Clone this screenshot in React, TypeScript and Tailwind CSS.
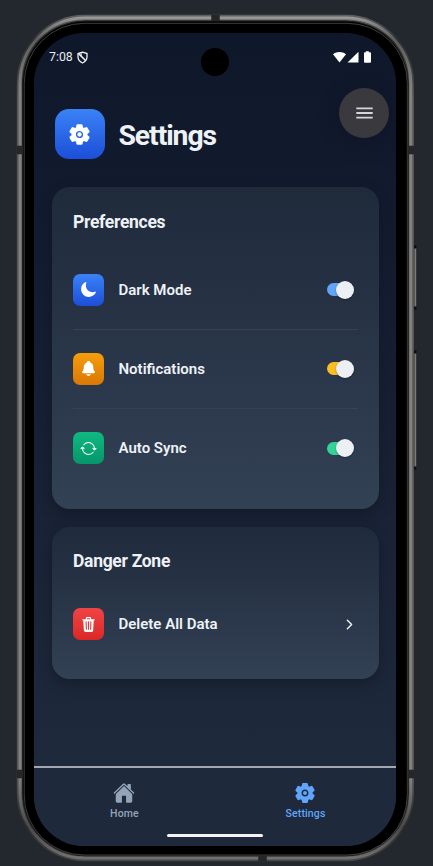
import React from "react";
import {
  IoSettings,
  IoMoon,
  IoNotifications,
  IoSync,
  IoTrash,
  IoHome,
  IoChevronForward,
} from "react-icons/io5";

function IconTile({ tone, children }: { tone: string; children: React.ReactNode }) {
  return (
    <div className={`flex h-8 w-[31px] shrink-0 items-center justify-center rounded-[7px] bg-linear-to-b text-white ${tone}`}>
      {children}
    </div>
  );
}

function Toggle({ color }: { color: string }) {
  return (
    <div className={`mr-[5px] flex h-[13px] w-[26px] items-center justify-end rounded-full ${color}`}>
      <div className="-mr-[1.5px] size-[18px] shrink-0 rounded-full bg-[#eceff4] shadow-[0_1px_2px_rgba(0,0,0,0.35)]" />
    </div>
  );
}

function Row({ tone, icon, label, children }: { tone: string; icon: React.ReactNode; label: string; children: React.ReactNode }) {
  return (
    <div className="flex h-[79px] items-center">
      <IconTile tone={tone}>{icon}</IconTile>
      <span className="mt-px ml-[14.5px] flex-1 text-[15px] leading-none font-semibold text-[#eef2f7]">{label}</span>
      {children}
    </div>
  );
}

function Card({ title, className, children }: { title: string; className: string; children: React.ReactNode }) {
  return (
    <section className={`rounded-[18px] bg-linear-to-b from-[#1f2a3b] to-[#334155] pr-[21px] pl-[21px] shadow-[0_5px_14px_rgba(0,0,0,0.25)] ${className}`}>
      <h2 className="h-[21px] text-[17.5px] leading-[21px] font-bold tracking-[-0.3px] text-[#eef2f7]">{title}</h2>
      {children}
    </section>
  );
}

function StatusBar() {
  return (
    <div className="flex h-[48px] items-center pr-[24px] pl-[15px] text-white">
      <span className="mt-px text-[12.3px] leading-none text-[#e9ebf0]">7:08</span>
      <svg className="ml-[4px]" width="11" height="13" viewBox="0 0 11 13" fill="none" stroke="#eef0f4" strokeWidth="1.3">
        <path d="M5.5 1.2 10 2.6v3.2c0 3-2 5.1-4.5 6.2C3 10.9 1 8.8 1 5.8V2.6z" />
        <path d="M1.6 2.6 8.8 9.8" strokeWidth="1.5" />
        <path d="M4.2 1.8v3.4" strokeWidth="1" />
      </svg>
      <div className="flex-1" />
      <svg width="39" height="13" viewBox="0 0 39 13" fill="#fff">
        <path d="M0 3.2C3.6.1 9.4.1 13 3.2L6.5 11.5z" />
        <path d="M25.5.7v10.8h-11z" />
        <path d="M32.8 1.3V.3h3v1h1.2q1 0 1 1v8.4q0 1-1 1h-5q-1 0-1-1V2.3q0-1 1-1z" />
      </svg>
    </div>
  );
}

function Frame() {
  return (
    <svg className="pointer-events-none absolute inset-0" width="433" height="866" viewBox="0 0 433 866" fill="none">
      <defs>
        <linearGradient id="sideKey" x1="0" x2="1" y1="0" y2="0">
          <stop offset="0" stopColor="#151515" />
          <stop offset=".55" stopColor="#8b8985" />
          <stop offset="1" stopColor="#33322f" />
        </linearGradient>
        <linearGradient id="rail" x1="0" x2="0" y1="15" y2="861" gradientUnits="userSpaceOnUse">
          <stop offset="0" stopColor="#a0a0a0" />
          <stop offset=".012" stopColor="#808080" />
          <stop offset=".03" stopColor="#5c5c5c" />
          <stop offset=".085" stopColor="#838281" />
          <stop offset=".9" stopColor="#838281" />
          <stop offset=".96" stopColor="#484848" />
          <stop offset="1" stopColor="#757374" />
        </linearGradient>
        <linearGradient id="railEdge" x1="0" x2="0" y1="15" y2="861" gradientUnits="userSpaceOnUse">
          <stop offset="0" stopColor="#606060" />
          <stop offset=".03" stopColor="#2e2e2e" />
          <stop offset=".1" stopColor="#555453" />
          <stop offset=".9" stopColor="#555453" />
          <stop offset=".96" stopColor="#2b2b2b" />
          <stop offset="1" stopColor="#484747" />
        </linearGradient>
      </defs>
      <rect x="413.5" y="247" width="3.2" height="61" rx="1.5" fill="url(#sideKey)" />
      <rect x="413.5" y="351" width="3.2" height="118" rx="1.5" fill="url(#sideKey)" />
      <path d="M414 247h2.5M414 308h2.5M414 352h2.5M414 468h2.5" stroke="#0c0c0c" strokeWidth="3" />
      <rect x="16.8" y="14.7" width="397.2" height="846.5" rx="68" fill="url(#railEdge)" />
      <rect x="20" y="17.9" width="390.8" height="840.1" rx="65" stroke="url(#rail)" strokeWidth="3" />
      <rect x="22.6" y="21" width="385.6" height="834.8" rx="62.5" fill="#000" stroke="#1c1c1c" strokeWidth="1" />
      <rect x="24.2" y="23.3" width="383.1" height="831.7" rx="60" stroke="#4c4c4c" strokeWidth=".8" />
      <path d="M16.8 150h6.2M407.8 150h6.2M16.8 774h6.2M407.8 774h6.2" stroke="#262626" strokeWidth="8.5" />
      <path d="M215.5 14.7v6.3M262.5 855.5v5.7" stroke="#262626" strokeWidth="8.5" />
    </svg>
  );
}

export default function App() {
  return (
    <div className="relative h-[866px] w-[433px] overflow-hidden bg-[#23282f] pt-[33px] pl-[34px] font-['Roboto','Noto_Sans',sans-serif]">
      <Frame />
      <main className="relative flex h-[813px] w-[362px] flex-col overflow-hidden rounded-[50px] bg-linear-to-b from-[#0f172a] to-[#1e293b] to-90%">
        <StatusBar />
        <header className="mt-[28.4px] flex h-[50px] items-center pl-[21px]">
          <div className="flex size-[50px] items-center justify-center rounded-[14px] bg-linear-to-b from-[#3b82f6] to-[#1d4ed8] pr-px text-white">
            <IoSettings size={23} />
          </div>
          <h1 className="mt-[4px] ml-[13.5px] text-[28.3px] leading-[34px] font-bold tracking-[-1.05px] text-[#eef2f7]">Settings</h1>
        </header>

        <Card title="Preferences" className="mr-[17.5px] ml-[18px] mt-[28px] h-[321.5px] shrink-0 pt-[24.4px]">
          <div className="mt-[17.9px] divide-y divide-[#3b475a]/70">
            <Row tone="from-[#3b82f6] to-[#1d4ed8]" icon={<IoMoon size={17} />} label="Dark Mode">
              <Toggle color="bg-[#60a5fa]" />
            </Row>
            <Row tone="from-[#f59e0b] to-[#d97706]" icon={<IoNotifications size={17} />} label="Notifications">
              <Toggle color="bg-[#fbbf24]" />
            </Row>
            <Row tone="from-[#10b981] to-[#059669]" icon={<IoSync size={17} />} label="Auto Sync">
              <Toggle color="bg-[#34d399]" />
            </Row>
          </div>
        </Card>

        <Card title="Danger Zone" className="mr-[17.5px] ml-[18px] mt-[18px] h-[152px] shrink-0 pt-[24.4px]">
          <div className="mt-[12.7px]">
            <Row tone="from-[#ef4444] to-[#dc2626]" icon={<IoTrash size={17} />} label="Delete All Data">
              <IoChevronForward size={15} className="mr-px text-[#f1f5f9]" />
            </Row>
          </div>
        </Card>

        <nav className="mt-auto flex h-[80px] shrink-0 border-t-2 border-[#a3a7ae] bg-[#1e293b] pt-[13.5px] text-[10.5px] leading-[13px] font-medium">
          <div className="flex flex-1 flex-col items-center gap-[3px] text-[#94a3b8]">
            <IoHome size={22} className="mr-px" />
            <span className="tracking-[0.15px]">Home</span>
          </div>
          <div className="flex flex-1 flex-col items-center gap-[3px] text-[#60a5fa]">
            <IoSettings size={22} className="mr-px" />
            <span className="tracking-[0.15px]">Settings</span>
          </div>
        </nav>

        <div className="absolute top-[15px] left-[167px] size-[28px] rounded-full bg-black" />
        <div className="absolute top-[55px] left-[305.3px] flex size-[49.6px] items-center justify-center rounded-full bg-[#39393e] shadow-[0_5px_20px_rgba(15,15,35,0.4)]">
          <svg width="17" height="12" viewBox="0 0 17 12" stroke="#d6d7dd" strokeWidth="1.8">
            <path d="M.3 1.4h16.4M.3 6h16.4M.3 10.6h16.4" />
          </svg>
        </div>
        <div className="absolute bottom-[9px] left-[133px] h-[3px] w-[96px] rounded-full bg-[#f3f3f3]" />
      </main>
    </div>
  );
}
